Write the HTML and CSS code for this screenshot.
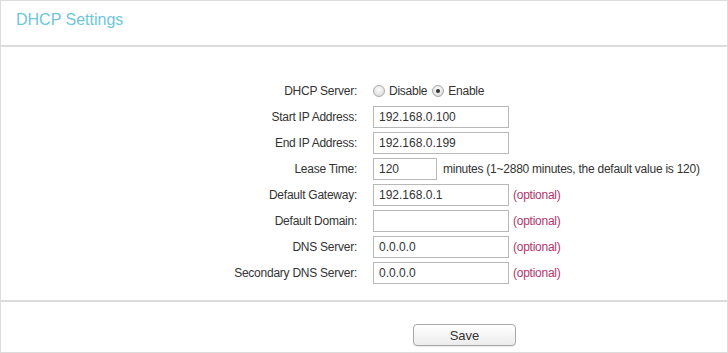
FILE: index.html
```html
<!DOCTYPE html>
<html lang="en">
<head>
    <meta charset="UTF-8">
    <title>DHCP Settings</title>
    <link rel="stylesheet" href="styles.css">
</head>
<body>
    <div class="panel">
        <div class="panel-head">
            <h2 class="panel-title">DHCP Settings</h2>
        </div>

        <div class="form">
            <label class="label">DHCP Server:</label>
            <div class="field">
                <label class="radio"><input type="radio" name="dhcp"> Disable</label>
                <label class="radio"><input type="radio" name="dhcp" checked> Enable</label>
            </div>

            <label class="label">Start IP Address:</label>
            <div class="field"><input class="text" type="text" value="192.168.0.100"></div>

            <label class="label">End IP Address:</label>
            <div class="field"><input class="text" type="text" value="192.168.0.199"></div>

            <label class="label">Lease Time:</label>
            <div class="field">
                <input class="text short" type="text" value="120">
                <span class="hint">minutes (1~2880 minutes, the default value is 120)</span>
            </div>

            <label class="label">Default Gateway:</label>
            <div class="field">
                <input class="text" type="text" value="192.168.0.1">
                <span class="optional">(optional)</span>
            </div>

            <label class="label">Default Domain:</label>
            <div class="field">
                <input class="text" type="text" value="">
                <span class="optional">(optional)</span>
            </div>

            <label class="label">DNS Server:</label>
            <div class="field">
                <input class="text" type="text" value="0.0.0.0">
                <span class="optional">(optional)</span>
            </div>

            <label class="label">Secondary DNS Server:</label>
            <div class="field">
                <input class="text" type="text" value="0.0.0.0">
                <span class="optional">(optional)</span>
            </div>
        </div>

        <div class="panel-foot">
            <button class="save-btn">Save</button>
        </div>
    </div>
</body>
</html>
```

FILE: styles.css
```css
* {
    margin: 0;
    padding: 0;
    box-sizing: border-box;
    font-family: 'Liberation Sans', Arial, sans-serif;
}

:root {
    --border: #dcdcdc;
    --title: #6ec6dc;
    --text: #333333;
    --optional: #b3336b;
    --input-border: #b8b8b8;
}

body {
    background: #ffffff;
    color: var(--text);
    font-size: 12px;
    letter-spacing: -0.25px;
}

.panel {
    width: 728px;
    height: 353px;
    border: 1px solid var(--border);
}

.panel-head {
    height: 46px;
    border-bottom: 2px solid var(--border);
    padding: 10px 15px 0;
}

.panel-title {
    font-size: 16px;
    font-weight: 400;
    color: var(--title);
    letter-spacing: 0;
}

.form {
    display: grid;
    grid-template-columns: 356px 1fr;
    column-gap: 16px;
    grid-auto-rows: 26px;
    padding: 31px 0 14px;
    border-bottom: 2px solid var(--border);
}

.label {
    text-align: right;
    line-height: 26px;
}

.field {
    display: flex;
    align-items: center;
    gap: 4px;
}

.radio {
    display: flex;
    align-items: center;
    gap: 4px;
    margin-right: 1px;
}

.radio input {
    appearance: none;
    width: 12px;
    height: 12px;
    border: 1px solid #a9a9a9;
    border-radius: 50%;
    background: radial-gradient(circle at 50% 35%, #fdfdfd, #d4d4d4);
    position: relative;
}

.radio input:checked::after {
    content: "";
    position: absolute;
    left: 3px;
    top: 3px;
    width: 4px;
    height: 4px;
    border-radius: 50%;
    background: #333;
}

.text {
    width: 136px;
    height: 22px;
    border: 1px solid var(--input-border);
    padding: 0 5px;
    font-size: 12px;
    color: var(--text);
    background: #fff;
    outline: none;
}

.text.short {
    width: 64px;
}

.hint {
    margin-left: 2px;
}

.optional {
    color: var(--optional);
}

.panel-foot {
    padding: 22px 0 0 412px;
}

.save-btn {
    width: 103px;
    height: 22px;
    border: 1px solid #a8a8a8;
    border-radius: 4px;
    background: linear-gradient(#ffffff, #ececec);
    font-size: 13px;
    color: #333;
    box-shadow: 0 1px 1px rgba(0,0,0,0.08);
}
```
